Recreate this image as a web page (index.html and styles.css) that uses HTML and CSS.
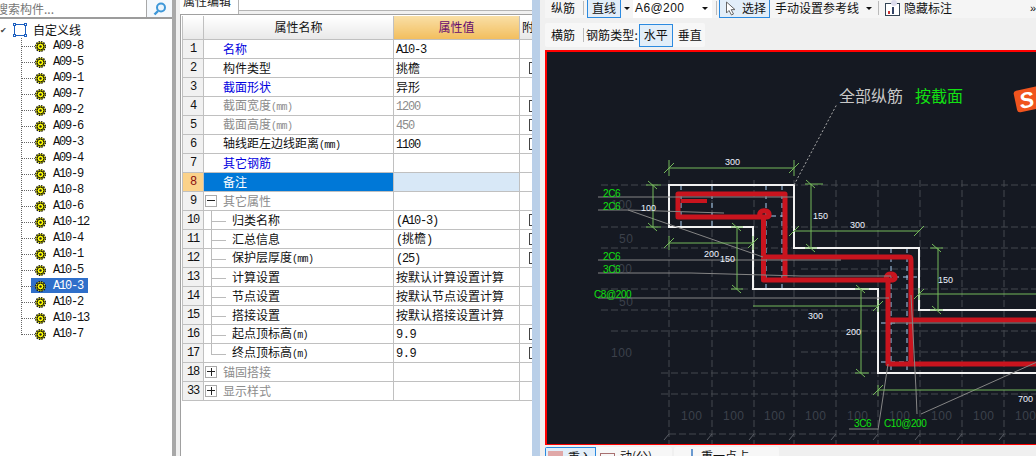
FILE: index.html
```html
<!DOCTYPE html>
<html lang="zh">
<head>
<meta charset="utf-8">
<title>属性编辑</title>
<link rel="stylesheet" href="styles.css">
</head>
<body>
<svg class="defs" width="0" height="0">
  <symbol id="gear" viewBox="0 0 11 11">
    <circle cx="5.5" cy="5.5" r="4.8" fill="#ffff00" stroke="#111" stroke-width="1.4" stroke-dasharray="1.5 1"/>
    <circle cx="5.5" cy="5.5" r="3.4" fill="#ffff00" stroke="#111" stroke-width="1"/>
    <circle cx="5.5" cy="5.5" r="1.2" fill="#222"/>
  </symbol>
</svg>
<div class="app">
  <aside class="side">
    <div class="search">
      <div class="search-box"><span class="search-text">搜索构件...</span></div>
      <svg class="search-icon" width="14" height="14" viewBox="0 0 14 14"><circle cx="8" cy="5.5" r="4" fill="#eaf4fc" stroke="#3d97d8" stroke-width="2"/><path d="M5 9 L1.5 12.5" stroke="#3d97d8" stroke-width="2.4"/></svg>
    </div>
    <div class="tree">
      <div class="root">
        <span class="check">✔</span>
        <svg class="root-icon" width="14" height="14" viewBox="0 0 14 14"><rect x="1.5" y="1.5" width="11" height="11" fill="none" stroke="#1c5fc0"/><g fill="#fff" stroke="#1c5fc0"><rect x=".5" y=".5" width="2" height="2"/><rect x="11.5" y=".5" width="2" height="2"/><rect x=".5" y="11.5" width="2" height="2"/><rect x="11.5" y="11.5" width="2" height="2"/></g></svg>
        <span>自定义线</span>
      </div>
      <ul class="nodes">
        <li><svg class="gear"><use href="#gear"/></svg><span>A09-8</span></li>
        <li><svg class="gear"><use href="#gear"/></svg><span>A09-5</span></li>
        <li><svg class="gear"><use href="#gear"/></svg><span>A09-1</span></li>
        <li><svg class="gear"><use href="#gear"/></svg><span>A09-7</span></li>
        <li><svg class="gear"><use href="#gear"/></svg><span>A09-2</span></li>
        <li><svg class="gear"><use href="#gear"/></svg><span>A09-6</span></li>
        <li><svg class="gear"><use href="#gear"/></svg><span>A09-3</span></li>
        <li><svg class="gear"><use href="#gear"/></svg><span>A09-4</span></li>
        <li><svg class="gear"><use href="#gear"/></svg><span>A10-9</span></li>
        <li><svg class="gear"><use href="#gear"/></svg><span>A10-8</span></li>
        <li><svg class="gear"><use href="#gear"/></svg><span>A10-6</span></li>
        <li><svg class="gear"><use href="#gear"/></svg><span>A10-12</span></li>
        <li><svg class="gear"><use href="#gear"/></svg><span>A10-4</span></li>
        <li><svg class="gear"><use href="#gear"/></svg><span>A10-1</span></li>
        <li><svg class="gear"><use href="#gear"/></svg><span>A10-5</span></li>
        <li class="sel"><svg class="gear"><use href="#gear"/></svg><span>A10-3</span></li>
        <li><svg class="gear"><use href="#gear"/></svg><span>A10-2</span></li>
        <li><svg class="gear"><use href="#gear"/></svg><span>A10-13</span></li>
        <li><svg class="gear"><use href="#gear"/></svg><span>A10-7</span></li>
      </ul>
    </div>
  </aside>

  <main class="props">
    <div class="tabbar"><div class="tab"><span>属性编辑</span></div></div>
    <div class="grid-wrap">
      <table class="grid">
        <colgroup><col class="c0"><col class="c1"><col class="c2"><col class="c3"></colgroup>
        <thead><tr><th></th><th>属性名称</th><th class="hot">属性值</th><th class="attach">附加</th></tr></thead>
        <tbody>
          <tr><td class="n">1</td><td class="name blue">名称</td><td class="v"><span class="m">A10-3</span></td><td></td></tr>
          <tr><td class="n">2</td><td class="name">构件类型</td><td class="v">挑檐</td><td><i class="cb"></i></td></tr>
          <tr><td class="n">3</td><td class="name blue">截面形状</td><td class="v">异形</td><td></td></tr>
          <tr><td class="n">4</td><td class="name gray">截面宽度<span class="m s">(mm)</span></td><td class="v gray"><span class="m">1200</span></td><td><i class="cb"></i></td></tr>
          <tr><td class="n">5</td><td class="name gray">截面高度<span class="m s">(mm)</span></td><td class="v gray"><span class="m">450</span></td><td><i class="cb"></i></td></tr>
          <tr><td class="n">6</td><td class="name">轴线距左边线距离<span class="m s">(mm)</span></td><td class="v"><span class="m">1100</span></td><td><i class="cb"></i></td></tr>
          <tr><td class="n">7</td><td class="name blue">其它钢筋</td><td class="v"></td><td></td></tr>
          <tr class="cur"><td class="n">8</td><td class="name">备注</td><td class="v"></td><td></td></tr>
          <tr><td class="n">9</td><td class="name gray group"><i class="ex minus"></i>其它属性</td><td class="v"></td><td></td></tr>
          <tr><td class="n">10</td><td class="name child">归类名称</td><td class="v"><span class="m">(A10-3)</span></td><td><i class="cb"></i></td></tr>
          <tr><td class="n">11</td><td class="name child">汇总信息</td><td class="v"><span class="m">(</span>挑檐<span class="m">)</span></td><td><i class="cb"></i></td></tr>
          <tr><td class="n">12</td><td class="name child">保护层厚度<span class="m s">(mm)</span></td><td class="v"><span class="m">(25)</span></td><td><i class="cb"></i></td></tr>
          <tr><td class="n">13</td><td class="name child">计算设置</td><td class="v">按默认计算设置计算</td><td></td></tr>
          <tr><td class="n">14</td><td class="name child">节点设置</td><td class="v">按默认节点设置计算</td><td></td></tr>
          <tr><td class="n">15</td><td class="name child">搭接设置</td><td class="v">按默认搭接设置计算</td><td></td></tr>
          <tr><td class="n">16</td><td class="name child">起点顶标高<span class="m s">(m)</span></td><td class="v"><span class="m wide">9.9</span></td><td><i class="cb"></i></td></tr>
          <tr><td class="n">17</td><td class="name child last">终点顶标高<span class="m s">(m)</span></td><td class="v"><span class="m wide">9.9</span></td><td><i class="cb"></i></td></tr>
          <tr><td class="n">18</td><td class="name gray group"><i class="ex plus"></i>锚固搭接</td><td class="v"></td><td></td></tr>
          <tr><td class="n">33</td><td class="name gray group"><i class="ex plus"></i>显示样式</td><td class="v"></td><td></td></tr>
        </tbody>
      </table>
    </div>
  </main>

  <div class="splitter"></div>

  <section class="editor">
    <div class="bar bar-top">
      <span class="item w-a">纵筋</span><i class="sep"></i>
      <span class="btn on b-line">直线</span><i class="caret"></i>
      <span class="combo">A6@200<i class="caret"></i></span><i class="sep sep-tight"></i>
      <span class="btn on b-sel">
        <svg width="12" height="15" viewBox="0 0 12 15"><path d="M1.5 1 V12 L4 9.5 L6.5 14 L8.5 13 L6.2 8.6 H10 Z" fill="#fff" stroke="#666"/></svg>
        选择</span>
      <span class="item w-b">手动设置参考线</span><i class="caret"></i><i class="sep"></i>
      <svg class="hide-icon" width="15" height="16" viewBox="0 0 15 16"><rect x=".5" y="3.5" width="14" height="12" fill="#fff" stroke="#345"/><rect x="3" y="11" width="2" height="3" fill="#c33"/><rect x="7" y="7" width="2" height="7" fill="#346"/><circle cx="9" cy="3" r="3" fill="#dde"/></svg>
      <span class="item">隐藏标注</span>
      <span class="more">»</span>
    </div>
    <div class="bar-second">
      <div class="bar-box">
        <span class="item w-a">横筋</span><i class="sep"></i>
        <span class="item w-c">钢筋类型:</span>
        <span class="btn on b-h">水平</span>
        <span class="item b-v">垂直</span>
      </div>
    </div>
    <div class="canvas">
      <svg class="drawing" width="490" height="392" viewBox="546 52 490 392">
        <g class="grid-lines">
          <path d="M668 180V444M711 180V444M753 180V444M793 180V444M835 180V444M877 180V444M919 180V444M961 180V444M1003 180V444"/>
          <path d="M600 185H1036M600 227H1036M600 248H1036M600 289H1036M800 269H1036M800 352H1036M600 310H1036M610 331H1036M660 373H1036M660 394H1036M668 434H1036"/>
        </g>
        <g class="ghost">
          <text x="610" y="209">100</text><text x="618" y="243">50</text><text x="610" y="273">100</text><text x="618" y="306">50</text><text x="610" y="357">100</text>
          <text x="680" y="420">100</text><text x="722" y="420">100</text><text x="763" y="420">100</text><text x="804" y="420">100</text><text x="846" y="420">100</text><text x="888" y="420">100</text><text x="930" y="420">100</text><text x="972" y="420">100</text><text x="1014" y="420">100</text>
        </g>
        <g class="ticks">
          <path d="M668 434l-5 6M711 434l-5 6M753 434l-5 6M793 434l-5 6M835 434l-5 6M877 434l-5 6M919 434l-5 6M961 434l-5 6M1003 434l-5 6"/>
        </g>
        <g class="blue-dash">
          <path d="M680 185V227M711 185V227M765 185V289M781 185V289M680 216H785M893 277H920M890 248V372M906 248V372M880 362H910M880 323H895"/>
        </g>
        <g class="outline">
          <path d="M1036 310H918V248H793V185H668V227H752V289H877V373H1036"/>
        </g>
        <g class="rebar">
          <path d="M680 201H706" class="thin"/>
          <path d="M784 280V194H677V217H766C769 217 769 212 765 211C760 210 757 213 760 217H762.5V280H892C895 280 895 274 890 274C885 274 884 279 887 280V364H1036"/>
          <path d="M762 257H908C910 257 910 259 910 262V364"/>
          <path d="M887 320H1036"/>
        </g>
        <g class="leaders">
          <path d="M597 197H792M597 210H627L723 213M597 260H840M597 273H690L800 276H890M597 298H888M627 210L762 257M1036 323H890M910 295L915 390L916 414M887 364L877 430M920 414L1036 362M848 429H877"/>
          <path class="dot" d="M793 185L836 104"/>
        </g>
        <g class="dims">
          <path d="M668 168H793M663 173l10-10M788 173l10-10M668 160V176M793 160V176"/>
          <path d="M652 185V227M645 185H660M645 227H660M647 181l9 8M647 223l9 8"/>
          <path d="M668 243H752M663 248l10-10M747 248l10-10M668 236V250M752 236V250"/>
          <path d="M736 227V289M730 227H742M730 289H742M731 223l9 8M731 285l9 8"/>
          <path d="M810 184V248M804 184H822M804 248H816M805 180l9 8M805 244l9 8"/>
          <path d="M793 231H918M788 236l10-10M913 236l10-10"/>
          <path d="M937 248V310M929 248H942M929 310H942M931 244l9 8M931 306l9 8"/>
          <path d="M918 294H1036M913 299l10-10M918 288V300"/>
          <path d="M752 306H877M872 311l10-10M877 300V312"/>
          <path d="M860 289V373M854 289H868M854 373H868M855 285l9 8M855 369l9 8"/>
          <path d="M877 390H1036M872 395l10-10M877 385V396"/>
        </g>
        <g class="dim-text">
          <text x="724" y="165">300</text><text x="640" y="211">100</text><text x="703" y="257">200</text><text x="719" y="262">150</text>
          <text x="812" y="219">150</text><text x="849" y="228">300</text><text x="937" y="283">150</text><text x="807" y="319">300</text><text x="845" y="335">200</text><text x="1017" y="402">700</text>
        </g>
        <g class="rebar-text">
          <text x="602" y="197">2C6</text><text x="602" y="210">2C6</text><text x="602" y="260">2C6</text><text x="602" y="273">3C6</text><text x="593" y="298">C8@200</text><text x="853" y="427">3C6</text><text x="883" y="427">C10@200</text>
        </g>
        <text class="title" x="838" y="102">全部纵筋</text>
        <text class="title green" x="914" y="102">按截面</text>
        <g class="sogou" transform="rotate(-12 1024 99)">
          <rect x="1014" y="89" width="26" height="22" rx="3"/>
          <text x="1018" y="108">S</text>
        </g>
      </svg>
    </div>
    <div class="bottom">
      <div class="tabs t-one">
        <span class="btn on b-cut"><i class="pink"></i>重入</span>
        <span class="cut"><i class="dim-ico"></i>动(公)</span>
      </div>
      <div class="tabs t-two"><i class="blue-bar"></i><span class="cut">重一点占</span></div>
    </div>
  </section>
</div>
</body>
</html>
```

FILE: styles.css
```css
* { box-sizing: border-box; }
html, body { margin: 0; padding: 0; height: 100%; overflow: hidden; }
body { font: 12px/1 "Noto Sans CJK SC", "Liberation Sans", sans-serif; color: #111; background: #f0f0f0; }
.defs { position: absolute; }
.app { display: flex; width: 1036px; height: 456px; overflow: hidden; }

/* tree */
.side { width: 176px; flex: none; display: flex; flex-direction: column; background: #fff; border-right: 4px solid #a8a8a8; }
.search { height: 19px; flex: none; display: flex; align-items: center; border-bottom: 2px solid #9c9c9c; background: #f4f8fc; }
.search-box { width: 147px; height: 17px; background: #fff; border-right: 1px solid #a8a8a8; overflow: hidden; display: flex; align-items: center; }
.search-text { margin-left: -4px; color: #777; white-space: nowrap; }
.search-icon { margin: 0 0 0 6px; }
.tree { flex: 1; padding-top: 3px; }
.root { height: 16px; display: flex; align-items: center; white-space: nowrap; }
.check { width: 13px; font-size: 8px; color: #444; }
.root-icon { margin-right: 6px; }
.nodes { list-style: none; margin: 0 0 0 21px; padding: 0; border-left: 1px dotted #666; height: 297px; }
.nodes li { height: 16px; display: flex; align-items: center; font: 12px/14px "Liberation Mono", monospace; letter-spacing: -1.2px; position: relative; }
.nodes li::before { content: ""; width: 13px; border-top: 1px dotted #666; flex: none; }
.gear { width: 11px; height: 11px; flex: none; margin-right: 7px; }
.nodes li span { padding: 0 3px 0 3px; margin-left: -3px; height: 15px; line-height: 15px; }
.nodes .sel { background: linear-gradient(#2f6fca, #2f6fca) 9px 0 / 57px 15px no-repeat; color: #fff; }

/* properties */
.props { width: 356px; flex: none; display: flex; flex-direction: column; background: #f0f0f0; padding-left: 4px; }
.tabbar { height: 14px; flex: none; display: flex; background: linear-gradient(#fff 10px, #b4b4b4 10px, #b4b4b4 11px, #f0f0f0 11px); }
.tab { width: 59px; height: 14px; background: #fff; border-right: 1px solid #b4b4b4; overflow: hidden; position: relative; }
.tab span { display: block; margin: -6px 0 0 3px; color: #222; line-height: 14px; white-space: nowrap; }
.grid-wrap { flex: 1; background: #fff; border-left: 1px solid #a0a0a0; border-top: 1px solid #a0a0a0; overflow: hidden; padding-left: 1px; padding-top: 1px; }
.grid { border-collapse: collapse; table-layout: fixed; width: 337px; }
.c0 { width: 21px; } .c1 { width: 190px; } .c2 { width: 126px; } .c3 { width: 40px; }
.grid th, .grid td { height: 19px; padding: 0; border: 1px solid #c0c0c0; font-weight: 400; white-space: nowrap; overflow: hidden; }
.grid th { height: 23px; background: linear-gradient(#fff, #e8e8e8); border-top: 0; text-align: center; }
.grid th.hot { background: linear-gradient(#f9dfa6, #f2be5e); color: #650a6e; }
.grid th.attach { text-align: left; padding-left: 2px; }
.n { background: #f1f1f1; text-align: center; font: 12px "Liberation Mono", monospace; letter-spacing: -1.2px; }
.name { padding-left: 19px !important; position: relative; }
.v { padding-left: 2px !important; }
.blue { color: #0000e0; }
.gray { color: #8c8c8c; }
.m { font-family: "Liberation Mono", monospace; font-size: 12px; letter-spacing: -1.2px; }
.m.s { font-size: 10px; letter-spacing: -.7px; }
.m.wide { letter-spacing: -.4px; }
.cur .n { background: #fbd28a; color: #8a1010; }
.cur .name { background: #0078d7; color: #fff; }
.cur .v { background: #d8e8f7; }
.cb { display: block; width: 12px; height: 12px; margin-left: 9px; border: 1px solid #444; }
.group { padding-left: 19px !important; }
.ex { position: absolute; left: 1px; top: 3px; width: 12px; height: 12px; border: 1px solid #aaa; background: linear-gradient(#222, #222) center / 8px 1px no-repeat; }
.ex.plus { background: linear-gradient(#222, #222) center / 8px 1px no-repeat, linear-gradient(#222, #222) center / 1px 8px no-repeat; }
.child { padding-left: 28px !important; }
.child::before { content: ""; position: absolute; left: 7px; top: -1px; bottom: 0; border-left: 1px solid #bbb; }
.child::after { content: ""; position: absolute; left: 7px; top: 10px; width: 15px; border-top: 1px solid #bbb; }
.last::before { bottom: 8px; }

.splitter { width: 8px; flex: none; background: #b9cfe8; }

/* editor */
.editor { flex: 1; min-width: 0; display: flex; flex-direction: column; background: #f0f0f0; padding-left: 5px; position: relative; overflow: hidden; }
.bar-top { height: 19px; margin-top: -1px; padding-bottom: 1px; display: flex; align-items: center; flex: none; white-space: nowrap; background: #f5f5f5; }
.item { flex: none; }
.w-a { margin-left: 6px; }
.sep { width: 1px; height: 14px; background: #bbb; margin-left: 8px; flex: none; }
.sep-tight { margin-left: 4px; }
.btn { flex: none; display: inline-flex; align-items: center; background: #e2eef9; border: 1px solid #2b8ae0; }
.b-line { margin-left: 3px; height: 19px; padding: 0 4px; }
.caret { flex: none; width: 0; height: 0; border: 3px solid transparent; border-top-color: #111; border-bottom: 0; margin-left: 2px; }
.b-line + .caret { margin-left: 3px; }
.combo { flex: none; margin-left: 3px; width: 79px; height: 19px; background: #fff; display: flex; align-items: center; padding-left: 2px; font: 12px "Liberation Sans", sans-serif; justify-content: space-between; padding-right: 4px; letter-spacing: .4px; }
.b-sel { margin-left: 2px; height: 19px; width: 51px; padding-left: 5px; gap: 5px; }
.w-b { margin-left: 5px; }
.w-b + .caret { margin-left: 7px; }
.w-b + .caret + .sep { margin-left: 6px; }
.hide-icon { margin: 0 4px 0 6px; flex: none; }
.more { margin-left: auto; margin-right: 0; font: 11px "Liberation Sans", sans-serif; }
.bar-second { height: 32px; flex: none; padding-top: 5px; }
.bar-box { width: 160px; height: 24px; background: #f7f7f7; border-radius: 2px; display: flex; align-items: center; }
.w-c { margin-left: 2px; letter-spacing: .1px; }
.b-h { height: 23px; width: 34px; justify-content: center; margin-left: 1px; }
.b-v { margin-left: 5px; }
.canvas { flex: none; height: 395px; background: #151922; border: solid #ff0000; border-width: 2px 0 1px 2px; overflow: hidden; }
.drawing { display: block; }
.grid-lines path { fill: none; stroke: #44484f; stroke-width: 1; stroke-dasharray: 7 3; }
.ghost text { font: 12px "Liberation Sans", sans-serif; fill: #3c414b; letter-spacing: .5px; }
.ticks path { fill: none; stroke: #5a5e66; }
.blue-dash path { fill: none; stroke: #a8cdf0; stroke-dasharray: 5 4; }
.outline path { fill: none; stroke: #f2f2f2; stroke-width: 2; }
.rebar path { fill: none; stroke: #c9141e; stroke-width: 5; stroke-linejoin: round; }
.rebar .thin { stroke-width: 4; }
.leaders path { fill: none; stroke: #858585; stroke-width: 1; }
.leaders .dot { stroke: #aaa; stroke-dasharray: 2 2; }
.dims path { fill: none; stroke: #74b95a; stroke-width: 1; }
.dim-text text { font: 9px "Liberation Sans", sans-serif; fill: #eef4ff; }
.rebar-text text { font: 10px "Liberation Sans", sans-serif; fill: #10e010; letter-spacing: -.4px; }
.title { font-size: 16px; fill: #c8c8c8; }
.title.green { fill: #12e012; }
.sogou rect { fill: #f0541e; }
.sogou text { font: italic 700 22px "Liberation Sans", sans-serif; fill: #fff; }
.bottom { flex: 1; min-height: 0; display: flex; gap: 2px; padding-top: 2px; overflow: hidden; }
.tabs { background: #f7f7f7; border-radius: 2px; height: 20px; display: flex; align-items: flex-start; flex: none; overflow: hidden; }
.t-one { width: 127px; }
.t-two { width: 105px; padding-left: 17px; gap: 8px; }
.b-cut { width: 51px; height: 20px; padding-left: 2px; gap: 5px; align-items: flex-start; padding-top: 3px; }
.pink { width: 15px; height: 10px; background: #e0a8a8; flex: none; }
.dim-ico { width: 15px; height: 10px; border: 1px solid #a87070; margin: 3px 5px 0 4px; flex: none; }
.cut { display: inline-flex; padding-top: 3px; }
.blue-bar { width: 2px; height: 10px; margin-top: 2px; background: #6a9ad0; flex: none; }
```
